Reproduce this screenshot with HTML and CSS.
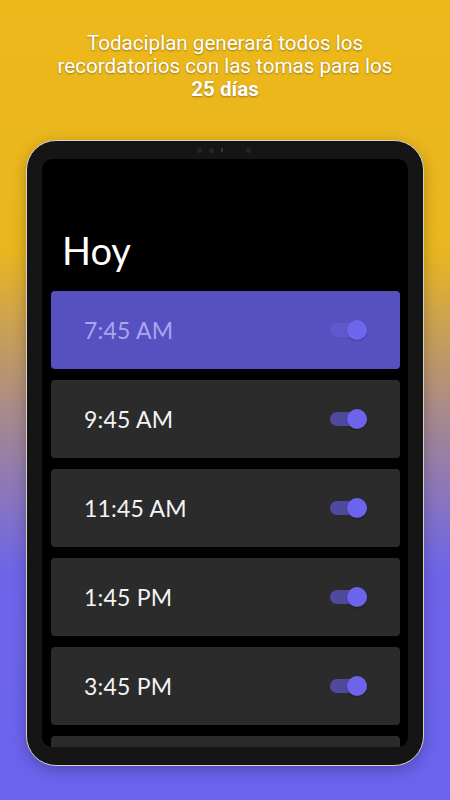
FILE: index.html
```html
<!DOCTYPE html>
<html lang="es">
<head>
<meta charset="utf-8">
<title>Todaciplan</title>
<link rel="stylesheet" href="styles.css">
</head>
<body>
<div class="page">
  <p class="headline">Todaciplan generará todos los<br>recordatorios con las tomas para los<br><b>25 días</b></p>
  <div class="tablet">
    <div class="camera">
      <span class="dot"></span><span class="dot"></span><span class="dot tiny"></span><span class="dot far"></span>
    </div>
    <div class="screen">
      <h1 class="title">Hoy</h1>
      <div class="list">
        <div class="card active"><span class="time">7:45 AM</span><span class="toggle"><span class="thumb"></span></span></div>
        <div class="card"><span class="time">9:45 AM</span><span class="toggle"><span class="thumb"></span></span></div>
        <div class="card"><span class="time">11:45 AM</span><span class="toggle"><span class="thumb"></span></span></div>
        <div class="card"><span class="time">1:45 PM</span><span class="toggle"><span class="thumb"></span></span></div>
        <div class="card"><span class="time">3:45 PM</span><span class="toggle"><span class="thumb"></span></span></div>
        <div class="card"></div>
      </div>
    </div>
  </div>
</div>
</body>
</html>
```
FILE: styles.css
```css
* { box-sizing: border-box; }
html, body { margin: 0; padding: 0; }
body {
  width: 450px;
  height: 800px;
  overflow: hidden;
  background: linear-gradient(180deg, #ecb81a 0px, #e9b61f 250px, #a98a8a 410px, #6e64e8 570px, #6b63ee 800px);
  font-family: Roboto, "Liberation Sans", sans-serif;
}
.page {
  display: flex;
  flex-direction: column;
  align-items: center;
  padding-top: 32px;
}
.headline {
  margin: 0;
  width: 420px;
  text-align: center;
  color: #fff;
  font-size: 20.6px;
  line-height: 23px;
  text-shadow: 0 1px 2px rgba(0,0,0,0.35);
}
.headline b { font-weight: 700; }
.tablet {
  margin-top: 39px;
  width: 398px;
  height: 626px;
  background: #151515;
  border: 1.5px solid #d6d2c8;
  border-radius: 30px;
  padding: 0 15px 18px 15px;
  display: flex;
  flex-direction: column;
  box-shadow: 0 4px 14px rgba(0,0,0,0.25);
}
.camera {
  height: 18px;
  display: flex;
  justify-content: center;
  align-items: center;
  gap: 7px;
  padding-right: 2px;
}
.dot { width: 5px; height: 5px; border-radius: 50%; background: #262626; }
.dot.tiny { width: 2px; height: 4px; background: #3a3a3a; border-radius: 1px; }
.dot.far { margin-left: 16px; }
.screen {
  flex: 1;
  background: #000;
  border-radius: 10px;
  overflow: hidden;
  padding: 0 8px 0 9px;
}
.title {
  margin: 0;
  padding: 67px 0 0 11px;
  height: 132px;
  font-family: Lato, "Open Sans", sans-serif;
  font-weight: 400;
  font-size: 38px;
  line-height: 48px;
  color: #fff;
}
.list {
  display: flex;
  flex-direction: column;
  gap: 11px;
}
.card {
  flex: none;
  height: 78px;
  background: #2b2b2b;
  border-radius: 4px;
  display: flex;
  align-items: center;
  justify-content: space-between;
  padding: 0 33px 0 33px;
}
.card.active { background: #5650c0; }
.time {
  font-family: Lato, "Open Sans", sans-serif;
  font-size: 23px;
  color: #f4f4f4;
  letter-spacing: 0.2px;
}
.card.active .time { color: #aaa5ee; }
.toggle {
  position: relative;
  width: 37px;
  height: 14px;
  border-radius: 7px;
  background: #4f4a9e;
}
.card.active .toggle { background: #6058cf; }
.thumb {
  position: absolute;
  right: 0;
  top: -3px;
  width: 20px;
  height: 20px;
  border-radius: 50%;
  background: #6d64ee;
  box-shadow: 0 1px 2px rgba(0,0,0,0.35);
}
.card.active .thumb { background: #6e66ec; box-shadow: 0 1px 2px rgba(0,0,0,0.2); }
```
